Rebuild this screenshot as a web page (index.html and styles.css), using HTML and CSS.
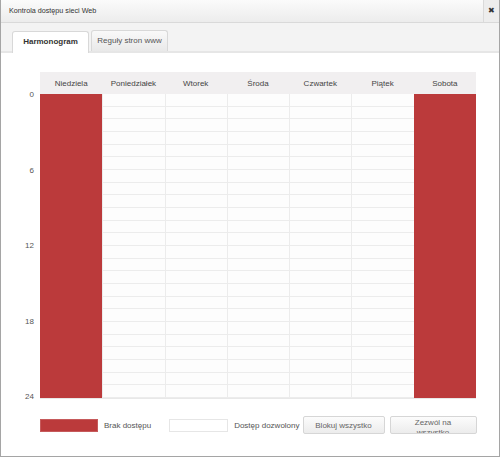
FILE: index.html
```html
<!DOCTYPE html>
<html>
<head>
  <title>Kontrola dostępu sieci Web</title>
  <link rel="stylesheet" href="styles.css">
</head>
<body>
  <div class="window">
    <div class="titlebar">
      <span class="title">Kontrola dostępu sieci Web</span>
      <span class="close">&#x2716;</span>
    </div>

    <div class="tabs">
      <div class="tab active">Harmonogram</div>
      <div class="tab">Reguły stron www</div>
    </div>

    <div class="content">
      <div class="schedule">
        <div class="hours">
          <span>0</span>
          <span>6</span>
          <span>12</span>
          <span>18</span>
          <span>24</span>
        </div>
        <div class="grid">
          <div class="head">
            <div>Niedziela</div>
            <div>Poniedziałek</div>
            <div>Wtorek</div>
            <div>Środa</div>
            <div>Czwartek</div>
            <div>Piątek</div>
            <div>Sobota</div>
          </div>
          <div class="days">
            <div class="day blocked"></div>
            <div class="day"></div>
            <div class="day"></div>
            <div class="day"></div>
            <div class="day"></div>
            <div class="day"></div>
            <div class="day blocked"></div>
          </div>
        </div>
      </div>

      <div class="legend">
        <span class="swatch red"></span>
        <span class="label">Brak dostępu</span>
        <span class="swatch white"></span>
        <span class="label">Dostęp dozwolony</span>
        <button class="btn btn-block">Blokuj wszystko</button>
        <button class="btn btn-allow">Zezwól na wszystko</button>
      </div>
    </div>
  </div>
</body>
</html>
```

FILE: styles.css
```css
body {
  margin: 0;
  font-family: "Liberation Sans", Arial, sans-serif;
  font-size: 8px;
  color: #444;
  background: #fff;
}

.window {
  width: 498px;
  height: 456px;
  border: 1px solid #a5a5a5;
  border-top: none;
  display: flex;
  flex-direction: column;
  overflow: hidden;
}

.titlebar {
  height: 22px;
  display: flex;
  align-items: stretch;
  background: linear-gradient(#fbfbfb, #ececec);
  border-bottom: 1px solid #d9d9d9;
}

.title {
  flex: 1;
  padding-left: 8px;
  line-height: 22px;
  color: #333;
  font-size: 7.2px;
}

.close {
  width: 15px;
  border-left: 1px solid #dadada;
  background: #ededed;
  text-align: center;
  line-height: 22px;
  font-size: 8px;
  color: #333;
}

.tabs {
  height: 21px;
  padding: 7px 0 0 11px;
  display: flex;
  align-items: flex-end;
  gap: 2px;
  background: #f3f3f3;
  border-bottom: 2px solid #e6e6e6;
}

.tab {
  width: 75px;
  height: 20px;
  line-height: 20px;
  text-align: center;
  border: 1px solid #d8d8d8;
  border-bottom: none;
  border-radius: 3px 3px 0 0;
  background: linear-gradient(#f9f9f9, #e9e9e9);
  color: #555;
}

.tab.active {
  height: 21px;
  background: #fff;
  color: #333;
  font-weight: bold;
  margin-bottom: -2px;
}

.content {
  flex: 1;
  background: #fff;
  padding-top: 19px;
}

.schedule {
  display: flex;
}

.hours {
  width: 33px;
  height: 312px;
  margin-top: 18px;
  display: flex;
  flex-direction: column;
  justify-content: space-between;
  align-items: flex-end;
  color: #555;
}

.hours span {
  height: 10px;
  line-height: 10px;
}

.grid {
  margin-left: 6px;
  width: 436px;
}

.head {
  height: 22px;
  display: grid;
  grid-template-columns: repeat(7, 1fr);
  background: #f1eff0;
}

.head div {
  text-align: center;
  line-height: 24px;
  color: #444;
}

.days {
  height: 304px;
  display: grid;
  grid-template-columns: repeat(7, 1fr);
  border-bottom: 1px solid #e8e8e8;
}

.day {
  border-left: 1px solid #ececec;
  background-color: #fdfdfd;
  background-image: repeating-linear-gradient(to bottom, transparent 0, transparent 11.67px, #ececec 11.67px, #ececec 12.67px);
}

.day:first-child {
  border-left: none;
}

.day.blocked {
  background: #bb3a3b;
  border-left-color: #bb3a3b;
}

.legend {
  margin: 14px 0 0 39px;
  height: 18px;
  display: flex;
  align-items: center;
}

.swatch {
  width: 58px;
  height: 13px;
  box-sizing: border-box;
}

.swatch.red {
  background: #bb3a3b;
  border: 1px solid #c65a5b;
}

.swatch.white {
  width: 59px;
  background: #fff;
  border: 1px solid #e6e6e6;
  margin-left: 18px;
}

.label {
  margin-left: 6px;
  color: #555;
}

.btn {
  height: 18px;
  box-sizing: border-box;
  border: 1px solid #d6d6d6;
  border-radius: 2px;
  background: linear-gradient(#fcfcfc, #ececec);
  font-family: "Liberation Sans", Arial, sans-serif;
  font-size: 8px;
  color: #666;
  padding: 0;
  overflow: hidden;
  cursor: pointer;
}

.btn-block {
  width: 82px;
  margin-left: 3px;
}

.btn-allow {
  width: 87px;
  margin-left: 5px;
  line-height: 10px;
  padding: 1px 20px 0;
  white-space: normal;
  display: block;
}
```
